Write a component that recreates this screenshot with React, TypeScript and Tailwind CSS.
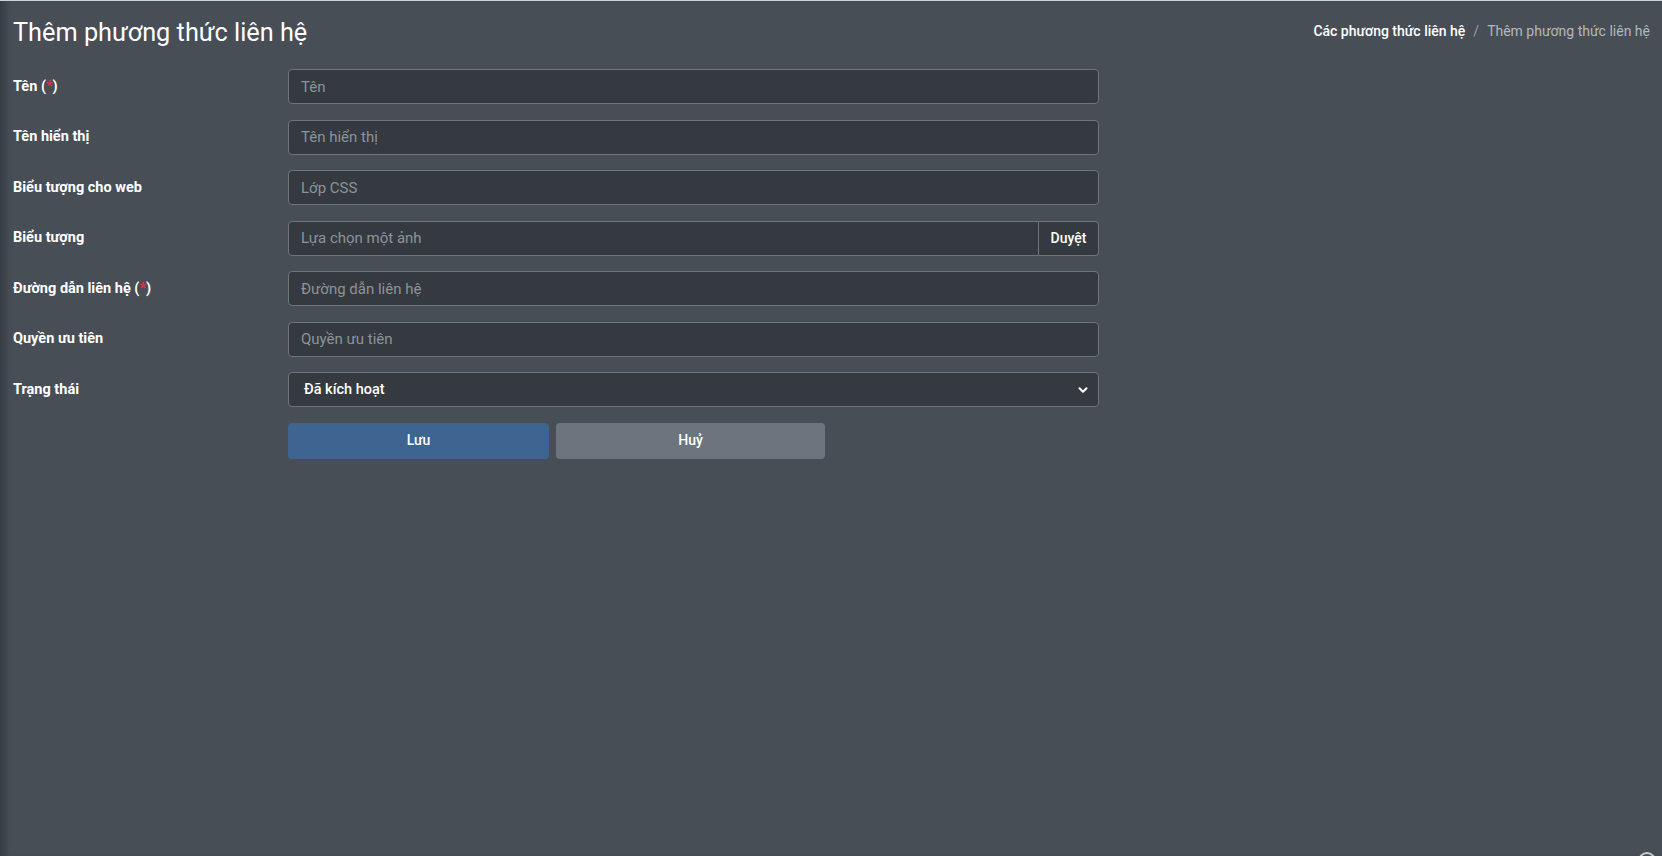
import { ChevronDown } from "lucide-react";

// form rows: label, placeholder, required
const FIELDS = [
    { label: "Tên", placeholder: "Tên", required: true },
    { label: "Tên hiển thị", placeholder: "Tên hiển thị" },
    { label: "Biểu tượng cho web", placeholder: "Lớp CSS" },
    { label: "Biểu tượng", placeholder: "Lựa chọn một ảnh", browse: true },
    { label: "Đường dẫn liên hệ", placeholder: "Đường dẫn liên hệ", required: true },
    { label: "Quyền ưu tiên", placeholder: "Quyền ưu tiên" },
];

function Label({ text, required }: { text: string; required?: boolean }) {
    return (
        <div className="w-[275px] shrink-0 text-[14.5px] font-bold text-white">
            {text}
            {required && (
                <>
                    {" ("}
                    <span className="text-[#dc3545]">*</span>
                    {")"}
                </>
            )}
        </div>
    );
}

export default function App() {
    return (
        <div
            className="relative min-h-[856px] w-full overflow-hidden border-t border-[#cfd3d7] bg-[#474e56] text-white shadow-[inset_10px_0_8px_-6px_rgba(0,0,0,0.25)]"
            style={{ fontFamily: "Roboto, 'Noto Sans', sans-serif" }}
        >
            {/* header */}
            <div className="flex items-start justify-between pl-[13px] pr-[12px] pt-[15px]">
                <h1 className="text-[25.3px] leading-[33px] font-normal text-white">Thêm phương thức liên hệ</h1>
                <div className="flex items-center gap-[8px] pt-[5px] text-[14px] leading-[20px]">
                    <span className="font-medium text-white">Các phương thức liên hệ</span>
                    <span className="text-[#9aa0a6]">/</span>
                    <span className="text-[#b3b8bd]">Thêm phương thức liên hệ</span>
                </div>
            </div>

            {/* form */}
            <div className="mt-[20px] flex flex-col gap-[15.5px] pl-[13px]">
                {FIELDS.map((f) => (
                    <div key={f.label} className="flex items-center">
                        <Label text={f.label} required={f.required} />
                        <div className="flex h-[35px] w-[811px]">
                            <input
                                placeholder={f.placeholder}
                                className={`h-full flex-1 border border-[#6c757d] bg-[#343a40] px-[12px] text-[15px] text-white placeholder:text-[#8d9399] outline-none ${
                                    f.browse ? "rounded-l-[4px]" : "rounded-[4px]"
                                }`}
                            />
                            {f.browse && (
                                <div className="flex h-full w-[60px] items-center justify-center rounded-r-[4px] border border-l-0 border-[#6c757d] bg-[#343a40] text-[14px] font-medium text-white">
                                    Duyệt
                                </div>
                            )}
                        </div>
                    </div>
                ))}

                <div className="flex items-center">
                    <Label text="Trạng thái" />
                    <div className="flex h-[35px] w-[811px] items-center justify-between rounded-[4px] border border-[#6c757d] bg-[#343a40] pl-[15px] pr-[8px]">
                        <span className="pt-[1px] text-[14.5px] font-medium text-white">Đã kích hoạt</span>
                        <ChevronDown size={14} strokeWidth={3.5} className="text-white" />
                    </div>
                </div>

                <div className="flex gap-[7px] pl-[275px]">
                    <button className="h-[36px] w-[261px] rounded-[4px] bg-[#3e6592] text-[14px] font-medium text-white">
                        Lưu
                    </button>
                    <button className="h-[36px] w-[269px] rounded-[4px] bg-[#6c757d] text-[14px] font-medium text-white">
                        Huỷ
                    </button>
                </div>
            </div>

            {/* scroll-to-top button peeking in the corner */}
            <div className="absolute bottom-[-14px] right-[6px] h-[18px] w-[18px] rounded-full border-2 border-[#c9cdd1]" />
        </div>
    );
}
